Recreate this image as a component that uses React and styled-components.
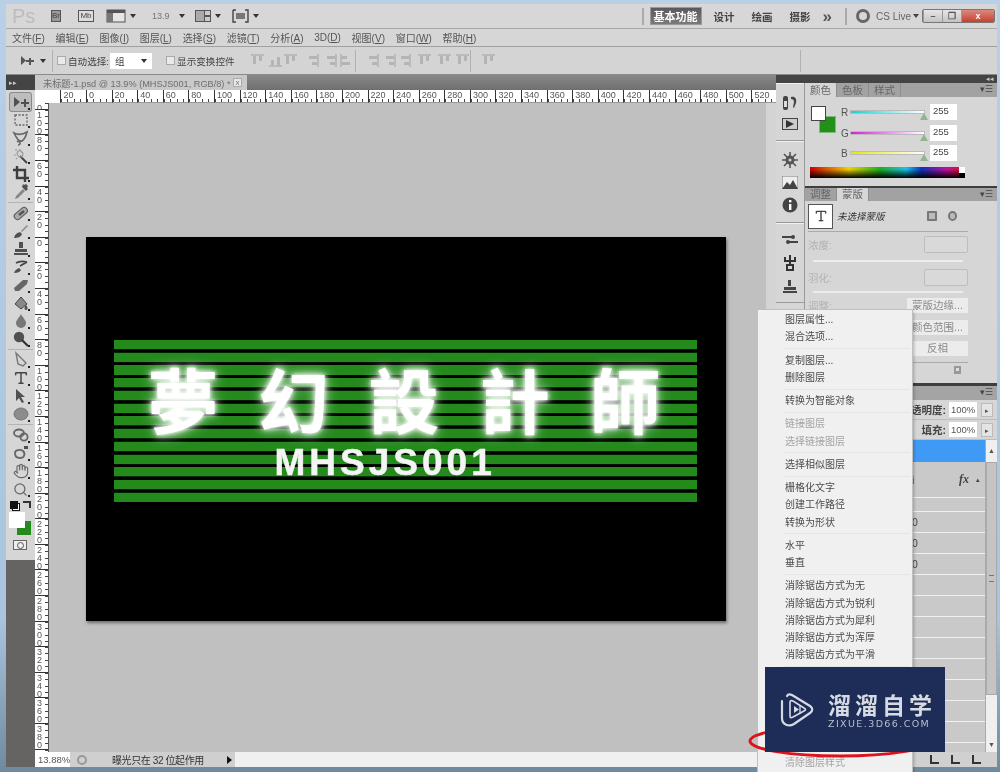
import React from "react";
import styled, { createGlobalStyle } from "styled-components";
import { Hand, Search, Type } from "lucide-react";

const GlobalStyle = createGlobalStyle`
  html, body { margin: 0; padding: 0; background: #a9c4de; }
  body { font-family: "Liberation Sans", "Noto Sans CJK SC", sans-serif; }
  * { box-sizing: border-box; }
`;

const Window = styled.div`
  position: relative;
  width: 1000px;
  height: 772px;
  overflow: hidden;
  padding: 4px 3px 5px 6px;
  background: linear-gradient(180deg, #b9d0e6, #a9c4de 80%, #6f8a9c);
  display: flex;
  flex-direction: column;
  filter: blur(0.45px);
`;

/* top application bar */
const AppBar = styled.div`
  height: 25px;
  flex: none;
  background: #d7d7d7;
  border-bottom: 1px solid #a8a8a8;
  display: flex;
  align-items: center;
  padding-left: 6px;
`;
const Logo = styled.div`
  font-size: 20px;
  color: #bcbcbc;
  width: 39px;
  flex: none;
`;
const BarGroup = styled.div`
  display: flex;
  align-items: center;
  flex: none;
  margin-left: ${(p) => p.$ml || 0}px;
`;
const Bridge = styled.div`
  width: ${(p) => p.$w}px;
  height: 12px;
  font-size: 8px;
  line-height: 10px;
  text-align: center;
  color: #444;
  border: 1px solid #555;
  background: ${(p) => p.$bg};
`;
const Caret = styled.span`
  display: inline-block;
  flex: none;
  margin-left: ${(p) => p.$ml ?? 4}px;
  border-left: 3px solid transparent;
  border-right: 3px solid transparent;
  border-top: 4px solid ${(p) => p.$color || "#333"};
`;
const Zoomed = styled.span`
  font-size: 9px;
  color: #777;
`;
const VLine = styled.div`
  width: 2px;
  height: 17px;
  flex: none;
  background: #aaa;
  margin-left: ${(p) => p.$ml || 0}px;
`;
const WorkspaceBtn = styled.div`
  width: 52px;
  height: 18px;
  font-size: 11px;
  font-weight: bold;
  line-height: 18px;
  text-align: center;
  white-space: nowrap;
  color: #fff;
  background: linear-gradient(180deg, #5a5a5a, #7a7a7a);
  border: 1px solid #999;
`;
const WorkspaceLink = styled.div`
  flex: none;
  font-size: 10.5px;
  font-weight: bold;
  white-space: nowrap;
  color: #444;
  margin-left: ${(p) => p.$ml}px;
`;
const More = styled.div`
  flex: none;
  font-size: 17px;
  line-height: 17px;
  font-weight: bold;
  color: #555;
  margin-left: 12px;
`;
const Ring = styled.div`
  width: 14px;
  height: 14px;
  flex: none;
  border: 3px solid #666;
  border-radius: 50%;
  margin-left: 9px;
`;
const CsLive = styled.div`
  font-size: 10px;
  color: #666;
  margin-left: 6px;
  white-space: nowrap;
`;
const WinButtons = styled.div`
  display: flex;
  height: 14px;
  flex: none;
  margin: 0 2px 0 auto;
  border: 1px solid #777;
  border-radius: 2px;
  overflow: hidden;
`;
const WinBtn = styled.div`
  width: ${(p) => p.$w}px;
  font-size: 9px;
  font-weight: bold;
  line-height: 12px;
  text-align: center;
  color: ${(p) => (p.$close ? "#fff" : "#555")};
  background: ${(p) => (p.$close ? "linear-gradient(180deg,#d98a80,#c8402f)" : "linear-gradient(180deg,#e6e6e6,#c4c4c4)")};
  border-left: 1px solid #999;
`;

/* menu */
const MenuBar = styled.div`
  height: 17px;
  flex: none;
  background: #d6d6d6;
  display: flex;
  align-items: center;
  gap: 10.7px;
  padding-left: 6px;
  font-size: 10px;
  color: #555;
`;
const MenuLabel = styled.span`
  white-space: nowrap;
  u { text-underline-offset: 1px; }
`;

/* options */
const OptionsBar = styled.div`
  height: 29px;
  flex: none;
  background: #d4d4d4;
  border-top: 1px solid #a0a0a0;
  border-bottom: 1px solid #8a8a8a;
  display: flex;
  align-items: center;
  font-size: 9.6px;
  color: #444;
  white-space: nowrap;
`;
const OptSep = styled.div`
  width: 1px;
  height: 22px;
  flex: none;
  background: #b0b0b0;
  margin-left: ${(p) => p.$ml}px;
`;
const Check = styled.div`
  width: 9px;
  height: 9px;
  flex: none;
  background: #e9e9e9;
  border: 1px solid #aaa;
  margin-left: ${(p) => p.$ml}px;
  margin-right: 2px;
`;
const SelectBox = styled.div`
  width: 42px;
  height: 16px;
  flex: none;
  margin-left: 1px;
  padding: 0 5px;
  background: #fff;
  display: flex;
  align-items: center;
  justify-content: space-between;
`;
const AlignSvg = styled.svg`
  width: 13px;
  height: 13px;
  flex: none;
  margin-left: ${(p) => p.$ml}px;
  transform: rotate(${(p) => p.$turn || 0}deg);
`;

/* workspace */
const Workspace = styled.div`
  flex: 1;
  min-height: 0;
  display: flex;
  background: #c8c8c8;
`;
const ToolColumn = styled.div`
  width: 29px;
  flex: none;
  display: flex;
  flex-direction: column;
  background: #d6d6d6;
`;
const DarkHeader = styled.div`
  height: ${(p) => p.$h}px;
  flex: none;
  background: #444;
  color: #ccc;
  font-size: 7px;
  line-height: ${(p) => p.$h}px;
  padding: 0 3px;
  display: flex;
  justify-content: ${(p) => p.$justify || "flex-start"};
`;
const ToolList = styled.div`
  padding-top: 3px;
  height: 470px;
  flex: none;
`;
const ToolSlot = styled.div`
  position: relative;
  height: 18px;
  margin: 0 4px;
  display: flex;
  align-items: center;
  justify-content: center;
  color: #505050;
  background: ${(p) => (p.$active ? "#bdbdbd" : "transparent")};
  box-shadow: ${(p) => (p.$active ? "0 0 0 1px #8a8a8a" : "none")};
  border-radius: 2px;
  &::after {
    content: "";
    position: absolute;
    right: 1px;
    bottom: 1px;
    width: 2px;
    height: 2px;
    background: #222;
  }
`;
const ToolSep = styled.div`
  height: 3px;
  margin: 0 2px;
  border-top: 1px solid #b4b4b4;
  transform: translateY(1px);
`;
const MiniColors = styled.div`
  height: 13px;
  padding: 0 4px;
  display: flex;
  align-items: center;
  justify-content: space-between;
`;
const MiniDefault = styled.div`
  width: 8px;
  height: 8px;
  background: #111;
  box-shadow: 2px 2px 0 -1px #fff, 2px 2px 0 0 #111;
`;
const MiniSwap = styled.div`
  width: 8px;
  height: 7px;
  border-top: 2px solid #333;
  border-right: 2px solid #333;
`;
const ColorStack = styled.div`
  position: relative;
  height: 25px;
  margin: 1px 0 3px 3px;
`;
const BackColor = styled.div`
  position: absolute;
  left: 8px;
  top: 9px;
  width: 14px;
  height: 14px;
  background: #238a1b;
`;
const ForeColor = styled.div`
  position: absolute;
  left: 0;
  top: 0;
  width: 16px;
  height: 16px;
  background: #fff;
`;
const MaskBtn = styled.div`
  width: 14px;
  height: 10px;
  margin: 0 0 0 7px;
  background: #eee;
  border: 1px solid #666;
  display: flex;
  align-items: center;
  justify-content: center;
  &::before {
    content: "";
    width: 5px;
    height: 5px;
    border: 1px solid #555;
    border-radius: 50%;
  }
`;
const ToolFill = styled.div`
  flex: 1;
  background: #656462;
`;

const DocColumn = styled.div`
  flex: none;
  width: 741px;
  display: flex;
  flex-direction: column;
`;
const TabBar = styled.div`
  height: 15px;
  flex: none;
  display: flex;
  background: linear-gradient(180deg, #888, #6f6f6f);
`;
const DocTab = styled.div`
  width: 212px;
  padding-left: 8px;
  display: flex;
  align-items: center;
  justify-content: space-between;
  font-size: 9.2px;
  color: #6e6e6e;
  background: #c9c9c9;
  white-space: nowrap;
`;
const TabClose = styled.div`
  width: 9px;
  height: 9px;
  margin-right: 5px;
  font-size: 8px;
  line-height: 8px;
  text-align: center;
  color: #777;
  background: #e8e8e8;
  border: 1px solid #aaa;
`;
const HRuler = styled.div`
  height: 13px;
  flex: none;
  display: flex;
  background: #d0d0d0;
  overflow: hidden;
`;
const RulerCorner = styled.div`
  width: 25.4px;
  flex: none;
  background: #fff;
`;
const HMark = styled.div`
  width: 25.6px;
  flex: none;
  padding-left: 2px;
  font-size: 9px;
  line-height: 10px;
  color: #555;
  background: #fff repeating-linear-gradient(90deg, #444 0 1px, transparent 1px 6.4px) left bottom / 100% 3px no-repeat;
  border-left: 1px solid #333;
  border-bottom: 1px solid #999;
`;
const RulerEnd = styled.div`
  flex: 1;
  font-size: 7px;
  line-height: 16px;
  text-align: center;
  color: #888;
  background: #d4d4d4;
`;
const DocBody = styled.div`
  flex: 1;
  min-height: 0;
  display: flex;
`;
const VRuler = styled.div`
  width: 14px;
  flex: none;
  background: #fff;
  overflow: hidden;
  border-right: 1px solid #555;
`;
const VMark = styled.div`
  height: ${(p) => p.$h || 25.6}px;
  padding: 1px 0 0 1px;
  font-size: 9px;
  line-height: 8px;
  color: #555;
  overflow: hidden;
  border-top: ${(p) => (p.$h ? 0 : "1px solid #333")};
  background: repeating-linear-gradient(180deg, #444 0 1px, transparent 1px 6.4px) right top / 3px 100% no-repeat;
  span { display: block; width: 7px; text-align: center; }
`;
const Canvas = styled.div`
  flex: 1;
  background: #c0c0c0;
  display: flex;
  align-items: center;
  justify-content: center;
  padding: 3px 4px 0 0;
`;
const Art = styled.div`
  width: 640px;
  height: 384px;
  flex: none;
  background: #000;
  box-shadow: 1px 2px 3px rgba(0, 0, 0, 0.45);
  padding: 103px 29px 0 28px;
`;
const Sign = styled.div`
  position: relative;
  height: 162px;
  background: repeating-linear-gradient(180deg, #248a1c 0 9px, #030 9px, #000 10px 12px, #020 12px 12.75px);
`;
const SignTitle = styled.div`
  position: absolute;
  left: 34px;
  top: 17px;
  white-space: nowrap;
  font-family: "Noto Sans CJK TC", sans-serif;
  font-size: 71px;
  line-height: 80px;
  font-weight: 700;
  letter-spacing: 39.5px;
  color: #fff;
  text-shadow: 0 0 4px #fff, 0 0 9px rgba(255, 255, 255, 0.85), 0 0 16px rgba(255, 255, 255, 0.55);
`;
const SignCode = styled.div`
  position: absolute;
  left: 161px;
  top: 103px;
  white-space: nowrap;
  font-family: "Liberation Sans", sans-serif;
  font-size: 37px;
  line-height: 40px;
  font-weight: 700;
  letter-spacing: 4px;
  color: #f4f4f4;
  -webkit-text-stroke: 0.5px #f4f4f4;
`;
const VScroll = styled.div`
  width: 10px;
  flex: none;
  background: #d4d4d4;
`;
const StatusBar = styled.div`
  height: 15px;
  flex: none;
  display: flex;
  align-items: center;
  background: #cfcfcf;
  font-size: 10px;
  color: #333;
`;
const ZoomField = styled.div`
  width: 35px;
  height: 100%;
  flex: none;
  padding-left: 3px;
  line-height: 15px;
  font-size: 9.5px;
  color: #555;
  background: #fff;
`;
const StatusGlyph = styled.div`
  width: 10px;
  height: 10px;
  flex: none;
  margin: 0 4px 0 7px;
  border: 2px solid #999;
  border-radius: 50%;
`;
const StatusText = styled.div`
  width: 136px;
  flex: none;
  padding-left: 21px;
  letter-spacing: -0.4px;
  white-space: nowrap;
`;
const PlayArrow = styled.div`
  width: 0;
  height: 0;
  flex: none;
  border-left: 5px solid #111;
  border-top: 4px solid transparent;
  border-bottom: 4px solid transparent;
`;
const HScroll = styled.div`
  flex: 1;
  height: 100%;
  margin-left: 3px;
  background: #f0f0f0;
`;

/* right dock */
const Dock = styled.div`
  flex: 1;
  min-width: 0;
  display: flex;
  flex-direction: column;
`;
const DockMain = styled.div`
  flex: 1;
  min-height: 0;
  display: flex;
`;
const IconStrip = styled.div`
  width: 29px;
  flex: none;
  background: #d6d6d6;
  border-right: 1px solid #999;
`;
const StripGroup = styled.div`
  height: ${(p) => p.$h}px;
  padding-top: 10px;
  display: flex;
  flex-direction: column;
  align-items: center;
  gap: ${(p) => p.$gap || 7}px;
  border-bottom: 1px solid #9a9a9a;
  border-top: 1px solid #f0f0f0;
  color: #3c3c3c;
`;
const Panels = styled.div`
  flex: 1;
  min-width: 0;
  display: flex;
  flex-direction: column;
  background: #d6d6d6;
`;
const TabRow = styled.div`
  height: ${(p) => p.$h}px;
  flex: none;
  display: flex;
  align-items: stretch;
  background: #a2a2a2;
  font-size: 10.5px;
  color: #666;
`;
const PanelTab = styled.div`
  padding: 0 5px;
  line-height: ${(p) => p.$lh || 14}px;
  background: ${(p) => (p.$active ? "#d6d6d6" : "transparent")};
  border-right: 1px solid #8e8e8e;
`;
const TabMenu = styled.div`
  margin-left: auto;
  padding-right: 4px;
  font-size: 9px;
  line-height: 13px;
  color: #444;
`;
const PanelGap = styled.div`
  height: ${(p) => p.$h}px;
  flex: none;
  background: #3e3e3e;
`;
const ColorBody = styled.div`
  height: 89px;
  flex: none;
  padding: 7px 0 0 5px;
`;
const ColorTop = styled.div`
  display: flex;
  height: 63px;
`;
const ColorSwatches = styled.div`
  position: relative;
  width: 31px;
  flex: none;
`;
const PanelFore = styled.div`
  position: absolute;
  left: 1px;
  top: 2px;
  width: 15px;
  height: 15px;
  background: #fff;
  border: 1px solid #444;
  z-index: 1;
`;
const PanelBack = styled.div`
  position: absolute;
  left: 10px;
  top: 13px;
  width: 15px;
  height: 15px;
  background: #23901a;
  box-shadow: 0 0 0 1px #7fb87a;
`;
const SliderRow = styled.div`
  height: 20.5px;
  display: flex;
  align-items: flex-start;
  font-size: 10px;
  color: #555;
`;
const SliderLabel = styled.div`
  width: 9px;
  line-height: 18px;
`;
const Track = styled.div`
  position: relative;
  width: 75px;
  height: 4px;
  margin: 6px 5px 0 0;
  background: linear-gradient(90deg, ${(p) => p.$from}, #fff);
  border: 1px solid #bbb;
`;
const Thumb = styled.div`
  position: absolute;
  right: -4px;
  top: 2px;
  border-left: 4px solid transparent;
  border-right: 4px solid transparent;
  border-bottom: 7px solid #8fb78f;
`;
const ValueBox = styled.div`
  width: 27px;
  height: 16px;
  padding-left: 3px;
  line-height: 14px;
  font-size: 9.5px;
  color: #444;
  background: #fff;
`;
const Spectrum = styled.div`
  position: relative;
  width: 155px;
  height: 11px;
  background: linear-gradient(180deg, rgba(0, 0, 0, 0) 20%, #000),
    linear-gradient(90deg, #c00 0, #f0d000 25%, #1bb01b 45%, #18c0e8 62%, #1030c0 72%, #c010a0 88%, #e01010 100%);
`;
const SpectrumEnd = styled.div`
  position: absolute;
  right: 0;
  top: 0;
  width: 6px;
  height: 100%;
  background: linear-gradient(180deg, #fff 50%, #000 50%);
`;

const MaskBody = styled.div`
  height: 182px;
  flex: none;
  padding: 3px 0 0 3px;
  font-size: 10.5px;
  color: #b2b2b2;
`;
const MaskHead = styled.div`
  width: 160px;
  height: 28px;
  display: flex;
  align-items: center;
  border-bottom: 1px solid #aaa;
  padding-bottom: 3px;
`;
const MaskThumb = styled.div`
  width: 25px;
  height: 25px;
  flex: none;
  color: #444;
  background: #fff;
  border: 1px solid #555;
  display: flex;
  align-items: center;
  justify-content: center;
`;
const MaskTitle = styled.div`
  margin-left: 4px;
  width: 101px;
  font-size: 9.5px;
  font-style: italic;
  color: #333;
`;
const MaskIcon = styled.div`
  width: 10px;
  height: 10px;
  margin-right: 11px;
  border: 2px solid #777;
  background: #bbb;
  border-radius: ${(p) => (p.$round ? "50%" : "1px")};
`;
const PropRow = styled.div`
  width: 160px;
  display: flex;
  align-items: center;
  justify-content: space-between;
  height: ${(p) => p.$h}px;
`;
const GhostInput = styled.div`
  width: 44px;
  height: 17px;
  border: 1px solid #bdbdbd;
  border-radius: 2px;
  background: #d9d9d9;
`;
const ThinTrack = styled.div`
  width: 150px;
  height: 2px;
  margin: 4px 0 5px 5px;
  background: #ececec;
`;
const MaskActions = styled.div`
  width: 160px;
  margin-top: 5px;
  display: grid;
  grid-template-columns: 1fr 61px;
  row-gap: 6.5px;
`;
const GhostButton = styled.div`
  height: 15px;
  line-height: 15px;
  text-align: center;
  font-size: 10.5px;
  color: #8a8a8a;
  background: #ececec;
`;
const MaskFoot = styled.div`
  width: 160px;
  height: 14px;
  margin-top: 6px;
  padding-right: 6px;
  border-top: 1px solid #aaa;
  display: flex;
  justify-content: flex-end;
  align-items: center;
`;

const LayersHead = styled.div`
  height: 14px;
  flex: none;
  background: #a4a4a4;
  font-size: 9px;
  color: #444;
  text-align: right;
  padding-right: 4px;
  line-height: 13px;
`;
const LayerOption = styled.div`
  height: 20px;
  flex: none;
  display: flex;
  align-items: center;
  justify-content: flex-end;
  padding-right: 4px;
  font-size: 10.5px;
  font-weight: bold;
  color: #444;
  border-bottom: 1px solid #bdbdbd;
`;
const PercentBox = styled.div`
  width: 28px;
  height: 15px;
  margin-left: 3px;
  padding-left: 2px;
  font-size: 9.5px;
  font-weight: normal;
  line-height: 15px;
  color: #555;
  background: #fff;
`;
const PercentArrow = styled.div`
  width: 12px;
  height: 14px;
  margin-left: 4px;
  font-size: 7px;
  font-weight: normal;
  line-height: 13px;
  text-align: center;
  color: #555;
  background: #e4e4e4;
  border: 1px solid #bbb;
`;
const LayerArea = styled.div`
  flex: 1;
  min-height: 0;
  display: flex;
`;
const LayerList = styled.div`
  flex: 1;
  min-width: 0;
  overflow: hidden;
`;
const LayerRow = styled.div`
  height: ${(p) => p.$h || 21}px;
  padding-left: 107px;
  padding-right: 2px;
  display: flex;
  align-items: center;
  font-size: 10.5px;
  color: #444;
  background: ${(p) => (p.$selected ? "#3f9af5" : "#c9c9c9")};
  border-bottom: 1px solid ${(p) => (p.$selected ? "#3f9af5" : "#f0f0f0")};
`;
const FxMark = styled.span`
  margin-left: auto;
  font-family: "Liberation Serif", serif;
  font-size: 12px;
  font-style: italic;
  font-weight: bold;
`;
const FxCaret = styled.span`
  margin-left: 7px;
  margin-right: 3px;
  font-size: 7px;
`;
const LayerScroll = styled.div`
  width: 12px;
  flex: none;
  display: flex;
  flex-direction: column;
  align-items: stretch;
  background: #efefef;
  border-left: 1px solid #aaa;
  font-size: 7px;
  line-height: 22px;
  text-align: center;
  color: #555;
`;
const ScrollThumb = styled.div`
  height: 233px;
  flex: none;
  background: #c4c4c4;
  border: 1px solid #aaa;
  display: flex;
  align-items: center;
  justify-content: center;
  &::before {
    content: "";
    width: 5px;
    height: 5px;
    border-top: 1px solid #777;
    border-bottom: 1px solid #777;
  }
`;
const ScrollEnd = styled.div`
  margin-top: auto;
  line-height: 14px;
`;
const LayersFoot = styled.div`
  height: 15px;
  flex: none;
  display: flex;
  align-items: center;
  justify-content: flex-end;
  gap: 12px;
  padding-right: 16px;
  background: #d0d0d0;
  color: #333;
`;
const FootIcon = styled.div`
  width: 9px;
  height: 9px;
  border-left: 2px solid #333;
  border-bottom: 2px solid #333;
`;

/* context menu, lies over the panels */
const ContextMenu = styled.div`
  position: absolute;
  left: 758px;
  top: 310px;
  width: 154px;
  height: 462px;
  padding-top: 1px;
  overflow: hidden;
  background: #f0f0f0;
  box-shadow: 0 0 0 1px #c0c0c0, 2px 2px 3px rgba(0, 0, 0, 0.25);
  font-size: 10px;
`;
const MenuItem = styled.div`
  height: 17.25px;
  line-height: 17px;
  padding-left: 27px;
  white-space: nowrap;
  color: ${(p) => (p.$off ? "#a4a4a4" : "#4c4c4c")};
`;
const MenuSep = styled.div`
  height: ${(p) => p.$h || 6}px;
  margin: 0 2px 0 25px;
  background: linear-gradient(#e4e4e4, #e4e4e4) center / 100% 1px no-repeat;
`;

const RedRing = styled.svg`
  position: absolute;
  left: 745px;
  top: 722px;
  width: 200px;
  height: 40px;
`;

const Watermark = styled.div`
  position: absolute;
  left: 765px;
  top: 667px;
  width: 180px;
  height: 85px;
  padding: 25px 0 0 15px;
  display: flex;
  gap: 14px;
  background: #1e2d58;
  color: #d6dae2;
`;
const WaterText = styled.div`
  display: flex;
  flex-direction: column;
`;
const WaterName = styled.div`
  font-family: "Noto Sans CJK SC", sans-serif;
  font-size: 23px;
  line-height: 24px;
  font-weight: 700;
  letter-spacing: 4px;
  white-space: nowrap;
`;
const WaterUrl = styled.div`
  margin-top: 2px;
  font-family: "DejaVu Sans", sans-serif;
  font-size: 9.5px;
  line-height: 12px;
  letter-spacing: 1.4px;
  white-space: nowrap;
  color: #b8bfcc;
`;

const ToolSvg = ({ children }) => (
  <svg width="18" height="18" viewBox="0 0 18 18" fill="currentColor">
    {children}
  </svg>
);

const toolGroups = [
  [
    <ToolSvg><path d="M2 4v10l6-5z" /><path d="M12 6h2v3h3v2h-3v3h-2v-3H9V9h3z" /></ToolSvg>,
    <ToolSvg><rect x="3" y="4" width="12" height="10" fill="none" stroke="#666" strokeWidth="1.3" strokeDasharray="2 1.5" /></ToolSvg>,
    <ToolSvg><path d="M2 4c4 2 8 2 13-1-1 4-2 7-5 9-3 1-5-2-8-8z M5 13c1-1 3-1 3 1s-1 2-2 2" fill="none" stroke="#666" strokeWidth="1.6" /></ToolSvg>,
    <ToolSvg><path d="M8 9l7 7" stroke="#444" strokeWidth="2" /><path d="M3 3h2M8 2v2M2 8h2M11 5l-1 1M4 12l1-1M6 4h3l2 3-1 3-3 0-2-3z" stroke="#999" strokeWidth="1.2" fill="none" /></ToolSvg>,
    <ToolSvg><path d="M5 1v12h12M1 5h12v12" fill="none" stroke="#3e3e3e" strokeWidth="2.4" /></ToolSvg>,
    <ToolSvg><path d="M3 16l1-3 7-7 2 2-7 7z" fill="#888" /><path d="M10 4l4 4 2-2-1-1 1-2-2-2-2 1-1-1z" /></ToolSvg>,
  ],
  [
    <ToolSvg><rect x="1" y="6" width="15" height="6.5" rx="3" transform="rotate(-40 9 9)" fill="#aaa" stroke="#555" /><path d="M7 11l5-4" stroke="#555" strokeWidth="2.4" /></ToolSvg>,
    <ToolSvg><path d="M2 16c1-4 3-5 6-6l2 2c-1 3-4 4-8 4z" /><path d="M9 9l6-6 1 1-6 6z" fill="#888" /></ToolSvg>,
    <ToolSvg><path d="M7 2h4v6H7z M3 9h12v3H3z M2 13h14v2H2z" /></ToolSvg>,
    <ToolSvg><path d="M2 15c1-3 3-4 5-5l2 2c-1 2-3 3-7 3z" /><path d="M4 5c3-2 7-2 11-1M8 8l7-4" fill="none" stroke="#444" strokeWidth="1.8" /></ToolSvg>,
    <ToolSvg><path d="M2 12L11 4h5l-1 4-8 7H3z" fill="#666" /></ToolSvg>,
    <ToolSvg><path d="M3 10l6-7 6 7-6 5z" fill="#888" stroke="#444" /><path d="M14 11c2 2 2 5 0 5s-2-3 0-5z" /></ToolSvg>,
    <ToolSvg><path d="M9 2c2 4 5 6 5 9a5 5 0 0 1-10 0c0-3 3-5 5-9z" fill="#777" /></ToolSvg>,
    <ToolSvg><circle cx="7" cy="7" r="5.2" /><path d="M10 10l6 6" stroke="#333" strokeWidth="2.2" /></ToolSvg>,
  ],
  [
    <ToolSvg><path d="M4 2l10 10-3 3-5-2z" fill="none" stroke="#777" strokeWidth="1.4" /></ToolSvg>,
    <Type size={16} strokeWidth={2.2} color="#444" />,
    <ToolSvg><path d="M4 2v12l3-3 3 5 2-1-3-5h4z" /></ToolSvg>,
    <ToolSvg><ellipse cx="9" cy="9" rx="7" ry="6" fill="#8c8c8c" stroke="#777" /></ToolSvg>,
  ],
  [
    <ToolSvg><ellipse cx="7" cy="7" rx="5" ry="3.5" fill="none" stroke="#666" strokeWidth="1.8" /><circle cx="12" cy="11" r="3.6" fill="none" stroke="#666" strokeWidth="1.8" /></ToolSvg>,
    <ToolSvg><path d="M3 9c0-3 5-4 8-2 3 3 1 7-3 7-3 0-5-2-5-5z" fill="none" stroke="#666" strokeWidth="1.8" /><rect x="12" y="2" width="4" height="3" /></ToolSvg>,
    <Hand size={16} strokeWidth={1.7} color="#666" />,
    <Search size={15} strokeWidth={2} color="#666" />,
  ],
];

const hLabels = [20, 0, ...Array.from({ length: 26 }, (_, i) => (i + 1) * 20)];
const vLabels = [100, 80, 60, 40, 20, 0, ...Array.from({ length: 20 }, (_, i) => (i + 1) * 20)];

const menuLabels = [
  ["文件", "F"], ["编辑", "E"], ["图像", "I"], ["图层", "L"], ["选择", "S"], ["滤镜", "T"],
  ["分析", "A"], ["3D", "D"], ["视图", "V"], ["窗口", "W"], ["帮助", "H"],
];

const contextItems = [
  "图层属性...", "混合选项...", 6, "复制图层...", "删除图层", 6, "转换为智能对象", 6,
  "-链接图层", "-选择链接图层", 6, "选择相似图层", 6, "栅格化文字", "创建工作路径", "转换为形状", 6,
  "水平", "垂直", 6, "消除锯齿方式为无", "消除锯齿方式为锐利", "消除锯齿方式为犀利", "消除锯齿方式为浑厚", "消除锯齿方式为平滑", 6,
  "转换为段落文本", "文字变形...", 6, "用户定义", "移去设置", 9, "-清除图层样式",
];

const AlignIcon = ({ ml, turn }) => (
  <AlignSvg $ml={ml} $turn={turn} viewBox="0 0 13 13">
    <path d="M0 1h13" stroke="#a0a0a0" />
    <path d="M2 2h3v8H2zM8 2h3v5H8z" fill="#b4b4b4" />
  </AlignSvg>
);

const LayoutIcon = () => (
  <svg width="20" height="14" viewBox="0 0 20 14">
    <rect x="1" y="1" width="18" height="12" fill="#e6e6e6" stroke="#555" />
    <rect x="1" y="1" width="18" height="3" fill="#555" />
    <rect x="1" y="4" width="6" height="9" fill="#777" />
  </svg>
);

const App = () => (
  <>
    <GlobalStyle />
    <Window>
      <AppBar>
        <Logo>Ps</Logo>
        <BarGroup><Bridge $w={10} $bg="#999">Br</Bridge></BarGroup>
        <BarGroup $ml={17}><Bridge $w={16} $bg="#ddd">Mb</Bridge></BarGroup>
        <BarGroup $ml={12}><LayoutIcon /><Caret /></BarGroup>
        <BarGroup $ml={16}><Zoomed>13.9</Zoomed><Caret $ml={9} /></BarGroup>
        <BarGroup $ml={10}>
          <svg width="16" height="12" viewBox="0 0 16 12"><rect width="16" height="12" fill="#555" /><rect x="1" y="1" width="8" height="10" fill="#aaa" /><rect x="10" y="1" width="5" height="4" fill="#ccc" /><rect x="10" y="7" width="5" height="4" fill="#ccc" /></svg>
          <Caret />
        </BarGroup>
        <BarGroup $ml={11}>
          <svg width="17" height="14" viewBox="0 0 17 14"><path d="M1 1h3M1 1v12h3M13 1h3v12h-3" fill="none" stroke="#444" strokeWidth="1.4" /><rect x="4" y="4" width="9" height="6" fill="#777" /></svg>
          <Caret />
        </BarGroup>
        <VLine $ml={383} />
        <BarGroup $ml={6}><WorkspaceBtn>基本功能</WorkspaceBtn></BarGroup>
        <WorkspaceLink $ml={12}>设计</WorkspaceLink>
        <WorkspaceLink $ml={17}>绘画</WorkspaceLink>
        <WorkspaceLink $ml={17}>摄影</WorkspaceLink>
        <More>»</More>
        <VLine $ml={13} />
        <Ring />
        <CsLive>CS Live</CsLive>
        <Caret $ml={2} $color="#444" />
        <WinButtons>
          <WinBtn $w={19}>–</WinBtn>
          <WinBtn $w={19}>❐</WinBtn>
          <WinBtn $w={33} $close>x</WinBtn>
        </WinButtons>
      </AppBar>

      <MenuBar>
        {menuLabels.map(([name, key]) => (
          <MenuLabel key={key}>{name}(<u>{key}</u>)</MenuLabel>
        ))}
      </MenuBar>

      <OptionsBar>
        <BarGroup $ml={14}>
          <svg width="16" height="12" viewBox="0 0 16 12" fill="#555"><path d="M1 1v9l5-4.500z" /><path d="M9 3h2v2h3v2h-3v3H9V7H6V5h3z" /></svg>
          <Caret />
        </BarGroup>
        <OptSep $ml={6} />
        <Check $ml={4} />
        自动选择:
        <SelectBox>组<Caret $ml={0} /></SelectBox>
        <Check $ml={14} />
        显示变换控件
        <AlignIcon ml={16} />
        <AlignIcon ml={5} turn={180} />
        <AlignIcon ml={2} />
        <AlignIcon ml={9} turn={90} />
        <AlignIcon ml={5} turn={90} />
        <AlignIcon ml={3} turn={270} />
        <OptSep $ml={2} />
        <AlignIcon ml={10} turn={90} />
        <AlignIcon ml={4} turn={90} />
        <AlignIcon ml={2} turn={90} />
        <AlignIcon ml={7} />
        <AlignIcon ml={7} />
        <AlignIcon ml={5} />
        <OptSep $ml={1} />
        <AlignIcon ml={11} />
        <OptSep $ml={305} />
      </OptionsBar>

      <Workspace>
        <ToolColumn>
          <DarkHeader $h={15}>▸▸</DarkHeader>
          <ToolList>
            {toolGroups.map((group, g) => (
              <React.Fragment key={g}>
                {group.map((icon, i) => (
                  <ToolSlot key={i} $active={g === 0 && i === 0}>{icon}</ToolSlot>
                ))}
                {g < toolGroups.length - 1 && <ToolSep />}
              </React.Fragment>
            ))}
            <MiniColors><MiniDefault /><MiniSwap /></MiniColors>
            <ColorStack><BackColor /><ForeColor /></ColorStack>
            <MaskBtn />
          </ToolList>
          <ToolFill />
        </ToolColumn>

        <DocColumn>
          <TabBar>
            <DocTab>
              未标题-1.psd @ 13.9% (MHSJS001, RGB/8) *
              <TabClose>x</TabClose>
            </DocTab>
          </TabBar>
          <HRuler>
            <RulerCorner />
            {hLabels.map((n, i) => <HMark key={i}>{n}</HMark>)}
            <RulerEnd>▲</RulerEnd>
          </HRuler>
          <DocBody>
            <VRuler>
              <VMark $h={5.8}><span>0</span></VMark>
              {vLabels.map((n, i) => (
                <VMark key={i}>{String(n).split("").map((d, j) => <span key={j}>{d}</span>)}</VMark>
              ))}
            </VRuler>
            <Canvas>
              <Art>
                <Sign>
                  <SignTitle>夢幻設計師</SignTitle>
                  <SignCode>MHSJS001</SignCode>
                </Sign>
              </Art>
            </Canvas>
            <VScroll />
          </DocBody>
          <StatusBar>
            <ZoomField>13.88%</ZoomField>
            <StatusGlyph />
            <StatusText>曝光只在 32 位起作用</StatusText>
            <PlayArrow />
            <HScroll />
          </StatusBar>
        </DocColumn>

        <Dock>
          <DarkHeader $h={8} $justify="space-between">
            <span />
            <span>◂◂</span>
          </DarkHeader>
          <DockMain>
            <IconStrip>
              <StripGroup $h={58} $gap={6}>
                <svg width="16" height="18" viewBox="0 0 16 18" fill="#444"><rect x="1" y="2" width="5" height="14" rx="2" /><rect x="2" y="7" width="3" height="6" fill="#ddd" /><path d="M9 3c4-1 6 2 5 6l-2 5-1-1 1-5c0-2-1-3-3-3z" /></svg>
                <svg width="16" height="12" viewBox="0 0 16 12"><rect x="0.5" y="0.5" width="15" height="11" fill="#ccc" stroke="#444" /><path d="M4 2v8l8-4z" fill="#333" /></svg>
              </StripGroup>
              <StripGroup $h={82} $gap={8}>
                <svg width="16" height="16" viewBox="0 0 16 16"><circle cx="8" cy="8" r="4.5" fill="#555" /><path d="M8 0v16M0 8h16M2 2l12 12M14 2L2 14" stroke="#555" strokeWidth="1.6" /><circle cx="8" cy="8" r="1.6" fill="#ccc" /></svg>
                <svg width="16" height="13" viewBox="0 0 16 13"><rect width="16" height="13" fill="#eee" stroke="#777" /><path d="M0 13l5-7 3 3 3-5 5 9z" fill="#444" /></svg>
                <svg width="16" height="16" viewBox="0 0 16 16"><circle cx="8" cy="8" r="7.5" fill="#444" /><rect x="7" y="7" width="2.4" height="6" fill="#fff" /><rect x="7" y="3" width="2.4" height="2.4" fill="#fff" /></svg>
              </StripGroup>
              <StripGroup $h={80} $gap={8}>
                <svg width="16" height="12" viewBox="0 0 16 12" fill="#444"><path d="M0 2h10v2H0zM7 7h9v2H7z" /><circle cx="11" cy="3" r="2" /><circle cx="6" cy="8" r="2" /></svg>
                <svg width="14" height="17" viewBox="0 0 14 17"><path d="M7 1v10M2 3v4h10V3" fill="none" stroke="#333" strokeWidth="2" /><rect x="4" y="11" width="6" height="5" fill="none" stroke="#333" strokeWidth="2" /></svg>
                <svg width="16" height="15" viewBox="0 0 16 15" fill="#444"><path d="M6 1h3v6H6z M2 8h12v3H2z M1 12h14v2H1z" /></svg>
              </StripGroup>
            </IconStrip>

            <Panels>
              <TabRow $h={14}>
                <PanelTab $active>颜色</PanelTab>
                <PanelTab>色板</PanelTab>
                <PanelTab>样式</PanelTab>
                <TabMenu>▾☰</TabMenu>
              </TabRow>
              <ColorBody>
                <ColorTop>
                  <ColorSwatches><PanelFore /><PanelBack /></ColorSwatches>
                  <div>
                    {[["R", "#12d6d6"], ["G", "#d61ed6"], ["B", "#e6e60e"]].map(([label, from]) => (
                      <SliderRow key={label}>
                        <SliderLabel>{label}</SliderLabel>
                        <Track $from={from}><Thumb /></Track>
                        <ValueBox>255</ValueBox>
                      </SliderRow>
                    ))}
                  </div>
                </ColorTop>
                <Spectrum><SpectrumEnd /></Spectrum>
              </ColorBody>
              <PanelGap $h={2} />
              <TabRow $h={13}>
                <PanelTab $lh={13}>调整</PanelTab>
                <PanelTab $lh={13} $active>蒙版</PanelTab>
                <TabMenu>▾☰</TabMenu>
              </TabRow>
              <MaskBody>
                <MaskHead>
                  <MaskThumb><Type size={14} strokeWidth={2.4} /></MaskThumb>
                  <MaskTitle>未选择蒙版</MaskTitle>
                  <MaskIcon />
                  <MaskIcon $round />
                </MaskHead>
                <PropRow $h={24}>浓度:<GhostInput /></PropRow>
                <ThinTrack />
                <PropRow $h={20}>羽化:<GhostInput /></PropRow>
                <ThinTrack />
                <MaskActions>
                  <span>调整:</span>
                  <GhostButton>蒙版边缘...</GhostButton>
                  <span />
                  <GhostButton>颜色范围...</GhostButton>
                  <span />
                  <GhostButton>反相</GhostButton>
                </MaskActions>
                <MaskFoot>
                  <svg width="9" height="10" viewBox="0 0 9 10"><path d="M1 1h7v8H1z" fill="#999" /><path d="M3 3h3v3H3z" fill="#ddd" /></svg>
                </MaskFoot>
              </MaskBody>
              <PanelGap $h={3} />
              <LayersHead>▾☰</LayersHead>
              <LayerOption>不透明度:<PercentBox>100%</PercentBox><PercentArrow>▸</PercentArrow></LayerOption>
              <LayerOption>填充:<PercentBox>100%</PercentBox><PercentArrow>▸</PercentArrow></LayerOption>
              <LayerArea>
                <LayerList>
                  <LayerRow $selected $h={22} />
                  <LayerRow $h={36}>i<FxMark>fx</FxMark><FxCaret>▴</FxCaret></LayerRow>
                  <LayerRow $h={14} />
                  {Array.from({ length: 12 }, (_, i) => (
                    <LayerRow key={i}>{i < 3 ? "0" : ""}</LayerRow>
                  ))}
                </LayerList>
                <LayerScroll>
                  ▲
                  <ScrollThumb />
                  <ScrollEnd>▼</ScrollEnd>
                </LayerScroll>
              </LayerArea>
              <LayersFoot>
                <FootIcon /><FootIcon /><FootIcon />
              </LayersFoot>
            </Panels>
          </DockMain>
        </Dock>
      </Workspace>

      <ContextMenu>
        {contextItems.map((item, i) =>
          typeof item === "number" ? (
            <MenuSep key={i} $h={item} />
          ) : (
            <MenuItem key={i} $off={item.startsWith("-")}>{item.replace(/^-/, "")}</MenuItem>
          )
        )}
      </ContextMenu>

      <RedRing viewBox="0 0 200 40">
        <ellipse cx="95" cy="19" rx="90" ry="15" fill="none" stroke="#d8141c" strokeWidth="3" />
      </RedRing>

      <Watermark>
        <svg width="34" height="36" viewBox="0 0 34 36" fill="none" stroke="#d6dae2" strokeWidth="2.2" strokeLinecap="round">
          <path d="M7 4c1-2 3-2 5-1l18 11c3 2 3 5 0 7L14 32c-5 3-12 1-12-6V9" />
          <path d="M10 10v14c0 2 1 2 3 1l11-6c2-1 2-2 0-3L13 9c-2-1-3 0-3 1z" strokeWidth="1.6" />
          <path d="M14 14v7l5-3.500z" fill="#d6dae2" stroke="none" />
          <path d="M20 14v7" strokeWidth="1.3" />
        </svg>
        <WaterText>
          <WaterName>溜溜自学</WaterName>
          <WaterUrl>ZIXUE.3D66.COM</WaterUrl>
        </WaterText>
      </Watermark>
    </Window>
  </>
);

export default App;
